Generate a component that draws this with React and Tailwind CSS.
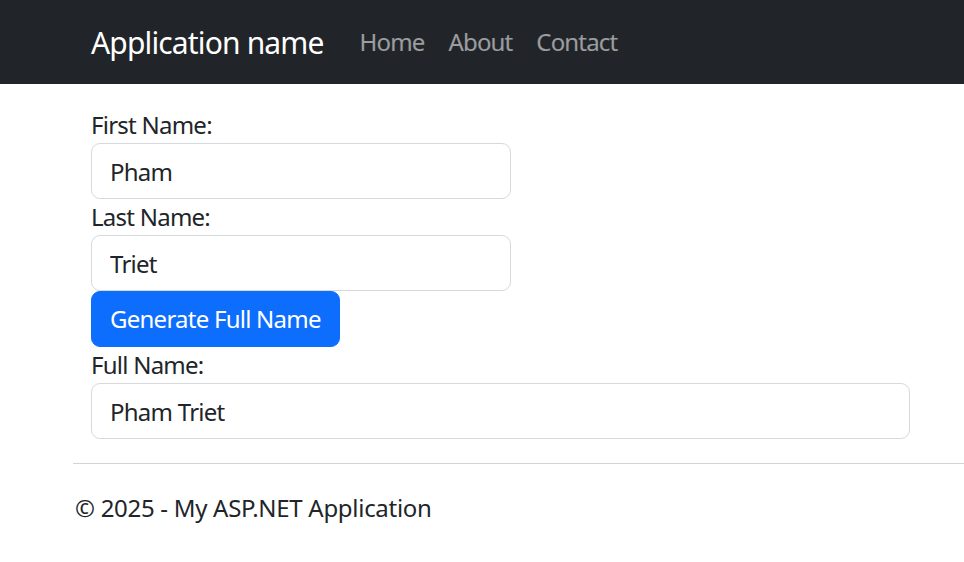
import React, { useState } from 'react'

const App = () => {
  const [first, setFirst] = useState('Pham')
  const [last, setLast] = useState('Triet')
  const [full, setFull] = useState('Pham Triet')

  return (
    <div className="min-h-screen bg-white text-[#212529] font-['Segoe_UI','Noto_Sans',sans-serif]">
      {/* Navbar */}
      <nav className="h-[84px] bg-[#212529] flex items-center">
        <div className="pl-[91px] flex items-center">
          <a href="#" className="text-[30px] leading-[45px] text-white mr-[24px] tracking-[-0.85px]">
            Application name
          </a>
          <ul className="flex tracking-[-0.85px]">
            <li><a href="#" className="block px-[12px] text-[24px] leading-[36px] text-white/55">Home</a></li>
            <li><a href="#" className="block px-[12px] text-[24px] leading-[36px] text-white/55">About</a></li>
            <li><a href="#" className="block px-[12px] text-[24px] leading-[36px] text-white/55">Contact</a></li>
          </ul>
        </div>
      </nav>

      {/* Form */}
      <div className="pl-[73px] pt-[23px]">
        <div className="px-[18px] text-[24px] leading-[36px] tracking-[-0.75px]">
          <label className="block">First Name:</label>
          <input
            value={first}
            onChange={(e) => setFirst(e.target.value)}
            className="block w-[420px] h-[56px] px-[18px] border border-[#d6d9dd] rounded-[9px] outline-none"
          />
          <label className="block">Last Name:</label>
          <input
            value={last}
            onChange={(e) => setLast(e.target.value)}
            className="block w-[420px] h-[56px] px-[18px] border border-[#d6d9dd] rounded-[9px] outline-none"
          />
          <button
            onClick={() => setFull(`${first} ${last}`)}
            className="block h-[56px] px-[18px] bg-[#0d6efd] text-white rounded-[9px] border border-[#0d6efd]"
          >
            Generate Full Name
          </button>
          <label className="block">Full Name:</label>
          <input
            value={full}
            readOnly
            className="block w-[819px] h-[56px] px-[18px] border border-[#d6d9dd] rounded-[9px] outline-none"
          />
        </div>

        <hr className="mt-[24px] border-t border-[#d3d3d3]" />
        <footer className="pt-[26px] pl-[2px] text-[24px] leading-[36px] tracking-[-0.012em]">
          <p>© 2025 - My ASP.NET Application</p>
        </footer>
      </div>
    </div>
  )
}

export default App
